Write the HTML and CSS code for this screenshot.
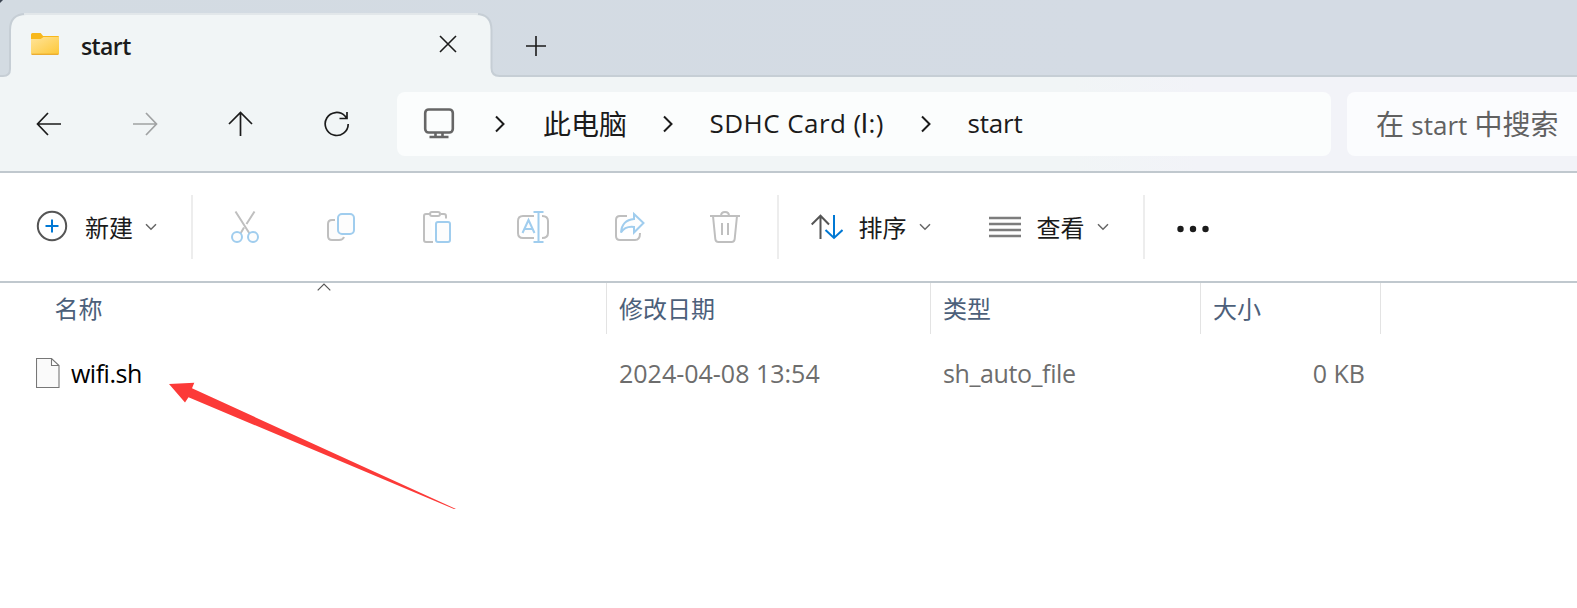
FILE: index.html
```html
<!DOCTYPE html>
<html lang="zh-CN">
<head>
<meta charset="utf-8">
<title>start</title>
<link rel="stylesheet" href="styles.css">
</head>
<body>
<div class="window">
  <header class="tabbar">
    <svg class="tab-shape" width="1577" height="77" viewBox="0 0 1577 77">
      <path class="tab-fill" d="M0 77V76H4Q10 76 10 70V30Q10 14 26 14H476Q491.500 14 491.500 30V68Q491.500 76 499.500 76H1577V77Z"/>
      <path class="tab-line" d="M0 76H3Q10 76 10 69V30Q10 14 26 14H476Q491.500 14 491.500 30V68Q491.500 76 499.500 76H1577"/>
      <path class="tab-top" d="M24 14H478"/>
      <path d="M0 0H3L0 3Z" fill="#3d4652"/>
    </svg>
    <div class="tab">
      <svg class="folder" width="28" height="22" viewBox="0 0 29 22" preserveAspectRatio="none">
        <defs><linearGradient id="fold" x1="0" y1="0" x2="1" y2="1"><stop offset="0" stop-color="#ffe49a"/><stop offset="1" stop-color="#fdc838"/></linearGradient></defs>
        <path d="M0 1.500Q0 0 1.500 0H10L12.500 3H28Q29 3 29 4V20H0Z" fill="#f8b81c"/>
        <path d="M0 6H10L13 4H29V20.500Q29 21 28 21H1Q0 21 0 20.500Z" fill="url(#fold)"/>
        <path d="M.5 21.300H28.500" stroke="#eaa51d" stroke-width="1.200"/>
      </svg>
      <span class="tab-title">start</span>
      <svg class="tab-close" width="18" height="18" viewBox="0 0 18 18"><path d="M1 1L17 17M17 1L1 17"/></svg>
    </div>
    <svg class="tab-new" width="20" height="20" viewBox="0 0 20 20"><path d="M0 10H20M10 0V20"/></svg>
  </header>

  <nav class="navbar">
    <div class="nav-icons">
      <svg class="line" width="26" height="26" viewBox="0 0 26 26"><path d="M12 2L1.500 13L12 24M1.500 13H25"/></svg>
      <svg class="line off" width="26" height="26" viewBox="0 0 26 26"><path d="M14 2L24.500 13L14 24M24.500 13H1"/></svg>
      <svg class="line" width="26" height="26" viewBox="0 0 26 26"><path d="M1 13L12.500 1.500L24 13M12.500 1.500V25"/></svg>
      <svg class="line" width="26" height="26" viewBox="0 0 26 26"><path d="M24.200 13A11.500 11.500 0 1 1 21 5L22.500 7M23 1V7.500H15.500"/></svg>
    </div>
    <div class="address">
      <svg class="monitor" width="32" height="32" viewBox="0 0 32 32"><rect x="2.200" y="1.500" width="27.600" height="23" rx="3.500"/><path d="M12.500 25V29M19.500 25V29M6.500 29H25.500"/></svg>
      <svg class="crumb" width="10" height="18" viewBox="0 0 10 18"><path d="M1 1.500L8.500 9L1 16.500"/></svg>
      <span class="c-pc">此电脑</span>
      <svg class="crumb" width="10" height="18" viewBox="0 0 10 18"><path d="M1 1.500L8.500 9L1 16.500"/></svg>
      <span class="c-card">SDHC Card (<span class="drive">I</span>:)</span>
      <svg class="crumb" width="10" height="18" viewBox="0 0 10 18"><path d="M1 1.500L8.500 9L1 16.500"/></svg>
      <span class="c-start">start</span>
    </div>
    <div class="search"><span>在 <span class="term">start</span> 中搜索</span></div>
  </nav>

  <div class="toolbar">
    <div class="cmd new">
      <svg class="plus" width="32" height="32" viewBox="0 0 32 32"><circle class="dark" cx="16" cy="16" r="14.200"/><path class="blue" d="M9.500 16H22.500M16 9.500V22.500"/></svg>
      <span>新建</span>
      <svg class="chev" width="12" height="8" viewBox="0 0 12 8"><path d="M1 1.200L6 6.200L11 1.200"/></svg>
    </div>
    <i class="sep"></i>
    <div class="icons">
      <svg width="32" height="34" viewBox="0 0 32 34"><path class="gray" d="M6.500 1.500L20.500 23.500M25.500 1.500L17.500 14M15 17.500L11.500 23.500"/><circle class="pale" cx="8" cy="27" r="5"/><circle class="pale" cx="24" cy="27" r="5"/></svg>
      <svg width="32" height="34" viewBox="0 0 32 34"><path class="gray fillit" d="M10 10H7Q3 10 3 14V26Q3 30 7 30H14Q18 30 19 27"/><rect class="pale" x="13" y="4" width="16" height="20" rx="4"/></svg>
      <svg width="32" height="34" viewBox="0 0 32 34"><path class="gray fillit" d="M9 4H5Q3 4 3 6V30Q3 32 5 32H12M20 4H23Q25 4 25 6V8.500"/><rect class="gray" x="9" y="2" width="10" height="4" rx="2"/><rect class="pale" x="15" y="12" width="14" height="20" rx="2"/></svg>
      <svg width="32" height="34" viewBox="1 0 32 34"><path class="gray" d="M18 6H7Q2 6 2 11V23Q2 28 7 28H18M26 6Q32 6 32 11V23Q32 28 26 28"/><path class="pale" d="M6.500 23L12.500 10L18.500 23M8.500 19H16.500M17.500 2H27.500M22.500 2V32M17.500 32H27.500"/></svg>
      <svg width="32" height="34" viewBox="0 0 32 34"><path class="gray" d="M14 6H7Q3 6 3 10V26Q3 30 7 30H22Q27 30 27 23"/><path class="pale" d="M21 4L30.500 13L21 22.500V17Q12 16 8 22.500Q9 10 21 9Z"/></svg>
      <svg width="32" height="34" viewBox="0 0 32 34"><path class="gray" d="M1 6H31M4 6L6.300 29Q6.600 32 9.500 32H22.500Q25.400 32 25.700 29L28 6M12 6Q12 2 16 2T20 6M13 13V25M19 13V25"/></svg>
    </div>
    <i class="sep"></i>
    <div class="cmd sort">
      <svg width="32" height="26" viewBox="0 0 32 26"><path class="dark" d="M.7 10.500L9.500 1.700L18 10.500M9.500 1.700V25"/><path class="blue" d="M14.500 16L23 24L31.500 16M23 24V1"/></svg>
      <span>排序</span>
      <svg class="chev" width="12" height="8" viewBox="0 0 12 8"><path d="M1 1.200L6 6.200L11 1.200"/></svg>
    </div>
    <div class="cmd view">
      <svg width="32" height="22" viewBox="0 0 32 22"><path d="M0 2H32M0 8H32M0 14H32M0 20H32" stroke="#7d7d7d" stroke-width="2.300"/></svg>
      <span>查看</span>
      <svg class="chev" width="12" height="8" viewBox="0 0 12 8"><path d="M1 1.200L6 6.200L11 1.200"/></svg>
    </div>
    <i class="sep"></i>
    <svg class="more" width="33" height="8" viewBox="0 0 33 8"><circle cx="3.500" cy="4" r="3.200"/><circle cx="16" cy="4" r="3.200"/><circle cx="28.500" cy="4" r="3.200"/></svg>
  </div>

  <main class="list">
    <div class="row head">
      <div class="cell name">名称<svg class="caret" width="14" height="8" viewBox="0 0 14 8"><path d="M.7 7.300L7 1L13.300 7.300"/></svg></div>
      <div class="cell">修改日期</div>
      <div class="cell">类型</div>
      <div class="cell">大小</div>
    </div>
    <div class="row file">
      <div class="cell name">
        <svg width="24" height="31" viewBox="0 0 24 31"><path d="M.5 .5H15.500L23 7.500V29.500H.5ZM15.500 .5V7.500H23" fill="#fafafa" stroke="#777" stroke-width="1.100"/></svg>
        <span>wifi.sh</span>
      </div>
      <div class="cell date">2024-04-08 13:54</div>
      <div class="cell type">sh_auto_file</div>
      <div class="cell size">0 KB</div>
    </div>
    <svg class="pointer" width="290" height="130" viewBox="168 381 290 130"><path d="M169 384L194.300 382.800L192 388.300L456 509L454 509L188.500 397.300L185 402.500Z" fill="#fc3a38"/></svg>
  </main>
</div>
</body>
</html>
```

FILE: styles.css
```css
* { box-sizing: border-box; }
body {
  margin: 0;
  width: 1577px;
  height: 608px;
  overflow: hidden;
  background: #fff;
  font-family: "Open Sans", "Noto Sans CJK SC", sans-serif;
  font-size: 25px;
  line-height: 36px;
  color: #1b1b1b;
  white-space: nowrap;
}
svg { display: block; flex: none; fill: none; }
.window { height: 608px; display: flex; flex-direction: column; }

.tabbar {
  position: relative;
  height: 77px;
  display: flex;
  background: linear-gradient(90deg, #d3dbe2, #d4dbe4 70%, #d4dbe4);
}
.tab-shape { position: absolute; left: 0; top: 0; }
.tab-fill { fill: #f1f5f6; }
.tab-line { stroke: #c6ced5; stroke-width: 2; }
.tab-top { stroke: #e2e7ea; stroke-width: 2; }
.tab { position: relative; width: 492px; display: flex; padding-left: 31px; }
.folder { margin-top: 33px; }
.tab-title { margin: 28px 0 0 22px; font-weight: 600; font-size: 23px; letter-spacing: -0.6px; width: 358px; }
.tab-close, .tab-new { stroke: #1b1b1b; stroke-width: 1.6; position: relative; }
.tab-close { margin-top: 35px; }
.tab-new { margin: 36px 0 0 34px; }

.navbar {
  height: 96px;
  display: flex;
  padding-top: 15px;
  border-bottom: 2px solid #c0c8ce;
  background: linear-gradient(90deg, #f1f5f6 0 68%, #f2f3f8 76%);
}
.nav-icons { width: 397px; padding: 19px 0 0 36px; display: flex; gap: 70px; }
.line { stroke: #1b1b1b; stroke-width: 1.7; }
.line.off { stroke: #a0a2a3; }
.address, .search { height: 64px; background: #fbfdfd; display: flex; align-items: center; }
.address { width: 934px; border-radius: 8px; padding-left: 26px; font-size: 26px; }
.monitor { stroke: #666; stroke-width: 2.6; margin-bottom: 1px; }
.crumb { stroke: #1b1b1b; stroke-width: 2; margin-left: 39.5px; }
.crumb ~ .crumb { margin-left: 40px; }
.c-pc { font-size: 28px; width: 84px; margin: 0 -4px 0 38.500px; }
.c-card { width: 177px; margin-left: 36.500px; margin-right: -6px; letter-spacing: 0.45px; }
.drive { font-family: Lato, sans-serif; margin-left: -1px; }
.c-start { margin-left: 37px; letter-spacing: -0.2px; }
.c-card, .c-start { padding-bottom: 2px; }
.search {
  width: 230px;
  margin-left: 16px;
  padding-left: 29px;
  border-radius: 8px 0 0 8px;
  background: #fbfcfe;
  color: #616161;
  font-size: 28px;
}
.term { font-size: 26px; }

.toolbar {
  height: 110px;
  display: flex;
  align-items: center;
  border-bottom: 2px solid #c0c8ce;
  font-size: 24px;
}
.cmd { display: flex; align-items: center; }
.cmd span { width: 48px; padding-top: 2px; }
.new { width: 191px; padding-left: 36px; }
.plus { margin-bottom: 2px; }
.new span { margin: 0 12px 0 17px; }
.sep { width: 2px; height: 64px; background: #ededed; }
.icons { width: 584px; padding-left: 36px; display: flex; gap: 64px; }
.sort { width: 210px; padding-left: 32px; }
.sort span { margin: 0 12.500px 0 15.500px; }
.view { width: 154px; }
.view span { margin: 0 12.500px 0 15.500px; }
.chev { stroke: #666; stroke-width: 1.5; }
.dark { stroke: #555; stroke-width: 2; }
.blue { stroke: #0078d4; stroke-width: 2; }
.gray { stroke: #bfbfbf; stroke-width: 2; }
.fillit { fill: #fcfcfc; }
.pale { stroke: #a0cdee; stroke-width: 2; fill: #fdfdfd; }
.more { margin: 4px 0 0 32px; fill: #1b1b1b; }

.list { position: relative; flex: 1; }
.row { display: grid; grid-template-columns: 607px 324px 270px 180px; }
.head { height: 51px; font-size: 24px; color: #4c607a; }
.head .cell { border-right: 1px solid #e3e3e3; padding: 8px 0 0 12px; }
.head .name { padding-left: 54.5px; position: relative; }
.caret { position: absolute; left: 317px; top: 0; stroke: #555; stroke-width: 1.2; }
.file { height: 80px; color: #6d6d6d; }
.file .cell { padding: 21px 0 0 12px; }
.file .name { display: flex; color: #000; padding-left: 36px; }
.file .name svg { margin-top: 3px; }
.file .name span { margin-left: 11px; letter-spacing: -0.5px; }
.file .type { letter-spacing: -0.4px; }
.file .size { padding: 21px 16px 0 0; text-align: right; }
.pointer { position: absolute; left: 168px; top: 98px; }
```
